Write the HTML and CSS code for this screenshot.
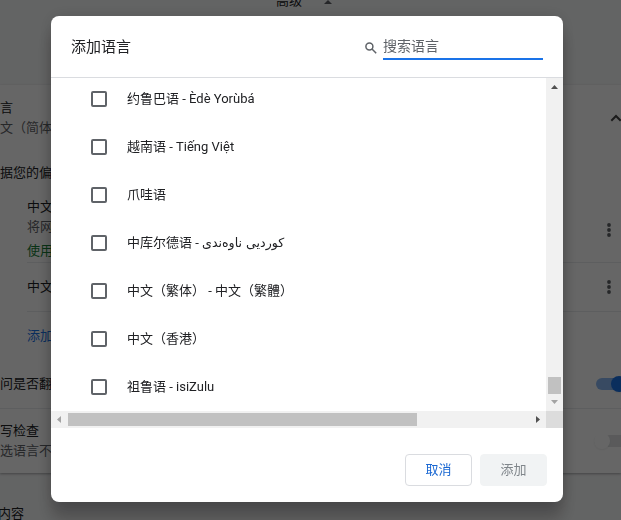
FILE: index.html
```html
<!DOCTYPE html>
<html lang="zh-CN">
<head>
<meta charset="utf-8">
<title>添加语言</title>
<link rel="stylesheet" href="styles.css">
</head>
<body>
<main class="page">
  <div class="advanced"><span>高级</span><svg width="8" height="4" viewBox="0 0 8 4"><path d="M0 4l4-4 4 4z" fill="#5f6368"/></svg></div>
  <section class="card">
    <div class="row row-language">
      <div><p>言</p><p class="muted">文（简体</p></div>
      <svg class="chevron" width="12" height="8" viewBox="0 0 12 8"><path d="M1.3 6.7L6 2l4.700 4.700" fill="none" stroke="#444" stroke-width="2"/></svg>
    </div>
    <div class="row row-order"><p>据您的偏</p></div>
    <div class="languages">
      <div class="row row-first">
        <div><p>中文</p><p class="muted">将网</p><p class="green">使用</p></div>
        <svg class="more" width="4" height="14" viewBox="0 0 4 14" fill="#5f6368"><circle cx="2" cy="2" r="1.900"/><circle cx="2" cy="7" r="1.900"/><circle cx="2" cy="12" r="1.900"/></svg>
      </div>
      <div class="row row-second">
        <p>中文</p>
        <svg class="more" width="4" height="14" viewBox="0 0 4 14" fill="#5f6368"><circle cx="2" cy="2" r="1.900"/><circle cx="2" cy="7" r="1.900"/><circle cx="2" cy="12" r="1.900"/></svg>
      </div>
      <div class="row row-add"><p class="blue">添加</p></div>
    </div>
    <div class="row row-translate"><p>问是否翻</p><span class="toggle on"></span></div>
    <div class="row row-spell"><div><p>写检查</p><p class="muted">选语言不</p></div><span class="toggle"></span></div>
  </section>
  <h2 class="next">内容</h2>
</main>
<div class="scrim">
  <div class="dialog">
    <header class="head">
      <h1>添加语言</h1>
      <div class="search">
        <svg width="12" height="12" viewBox="0 0 12 12" fill="none" stroke="#5f6368" stroke-width="1.500"><circle cx="4.400" cy="4.400" r="3.500"/><path d="M7 7l4.200 4.200"/></svg>
        <span class="field">搜索语言</span>
      </div>
    </header>
    <div class="body">
      <div class="viewport">
        <ul class="list">
          <li><i class="box"></i><span>约鲁巴语 - Èdè Yorùbá</span></li>
          <li><i class="box"></i><span>越南语 - Tiếng Việt</span></li>
          <li><i class="box"></i><span>爪哇语</span></li>
          <li><i class="box"></i><span>中库尔德语 - <bdi class="arabic" lang="ckb">کوردیی ناوەندی</bdi></span></li>
          <li><i class="box"></i><span>中文（繁体） - 中文（繁體）</span></li>
          <li><i class="box"></i><span>中文（香港）</span></li>
          <li><i class="box"></i><span>祖鲁语 - isiZulu</span></li>
        </ul>
      </div>
      <div class="vbar">
        <svg width="7" height="4" viewBox="0 0 7 4"><path d="M0 4L3.500 0 7 4z" fill="#505050"/></svg>
        <span class="vthumb"></span>
        <svg width="7" height="4" viewBox="0 0 7 4"><path d="M0 0L3.500 4 7 0z" fill="#a3a3a3"/></svg>
      </div>
      <div class="hbar">
        <svg width="4" height="7" viewBox="0 0 4 7"><path d="M4 0L0 3.500 4 7z" fill="#a3a3a3"/></svg>
        <span class="hthumb"></span>
        <svg width="4" height="7" viewBox="0 0 4 7"><path d="M0 0l4 3.500L0 7z" fill="#505050"/></svg>
      </div>
      <div class="corner"></div>
    </div>
    <footer class="foot">
      <button class="btn">取消</button>
      <button class="btn disabled" disabled>添加</button>
    </footer>
  </div>
</div>
</body>
</html>
```
FILE: styles.css
```css
* { box-sizing: border-box; margin: 0; padding: 0; }
body {
  width: 621px; height: 520px; overflow: hidden;
  font: 13px/20px Roboto, "Noto Sans CJK SC", sans-serif;
  color: #202124; background: #f8f9fa;
}
svg { display: block; flex: none; }
.page { height: 520px; overflow: hidden; white-space: nowrap; }
.advanced { height: 85px; padding-left: 276px; display: flex; align-items: flex-start; gap: 22px; }
.advanced span { margin-top: -9px; }
.card { height: 388px; background: #fff; box-shadow: 0 1px 2px rgba(60,64,67,.3), 0 1px 3px rgba(60,64,67,.15); }
.row { display: flex; justify-content: space-between; align-items: center; }
.muted { color: #5f6368; }
.green { color: #188038; }
.blue { color: #1a73e8; }
.row-language { height: 65px; }
.chevron { margin-right: -1px; }
.row-order { height: 45px; }
.languages { margin-left: 27px; }
.row-first { height: 68px; border-bottom: 1px solid #e8eaed; }
.row-first .green { margin-top: 4px; }
.row-first .more { margin-top: 2px; }
.row-second { height: 49px; border-bottom: 1px solid #e8eaed; }
.more { margin-right: 10px; }
.row-add { height: 47px; }
.row-translate { height: 50px; border-bottom: 1px solid #e8eaed; }
.row-spell { height: 64px; padding-bottom: 1px; }
.toggle { display: flex; align-items: center; width: 34px; height: 12px; margin-right: -9px; border-radius: 6px; background: #e0e2e4; flex: none; }
.toggle::before { content: ""; width: 16px; height: 16px; border-radius: 50%; background: #fff; box-shadow: 0 1px 2px rgba(0,0,0,.06); }
.row-spell .toggle { margin-right: -7px; }
.toggle.on { background: #8cb9f4; justify-content: flex-end; }
.toggle.on::before { background: #1a73e8; margin-right: 3px; }
.next { font-size: 13px; font-weight: 400; margin: 31px 0 0 -2px; }

.scrim { position: fixed; inset: 0; background: rgba(0,0,0,.6); padding: 16px 0 0 51px; }
.dialog {
  width: 512px; height: 486px; background: #fff; border-radius: 8px; overflow: hidden;
  display: flex; flex-direction: column;
  box-shadow: 0 0 16px rgba(0,0,0,.12), 0 16px 16px rgba(0,0,0,.24);
}
.head { height: 62px; padding: 0 20px; border-bottom: 1px solid #dadce0; display: flex; justify-content: space-between; align-items: center; }
.head h1 { font-size: 15px; font-weight: 400; }
.search { display: flex; align-items: center; gap: 6px; color: #5f6368; }
.field { width: 160px; height: 26px; border-bottom: 2px solid #1a73e8; font-size: 14px; line-height: 25px; }
.search svg { margin-top: 2px; }
.body { display: grid; grid-template: 333px 17px / 495px 17px; }
.viewport { overflow: hidden; }
.list { list-style: none; margin-top: -3px; }
.list li { height: 48px; padding-left: 40px; display: flex; align-items: center; gap: 20px; white-space: pre; }
.box { width: 16px; height: 16px; border: 2px solid #5f6368; border-radius: 2px; }
.arabic { font-family: "DejaVu Sans", sans-serif; font-size: 12.6px; line-height: 1; }
.vbar { background: #f1f1f1; display: flex; flex-direction: column; align-items: center; padding: 7px 0; }
.vthumb { width: 13px; height: 17px; margin: auto 0 6px; background: #c1c1c1; }
.hbar { background: #f1f1f1; display: flex; align-items: center; padding: 0 6px; }
.hthumb { width: 349px; height: 13px; margin: 0 auto 0 7px; background: #c1c1c1; }
.corner { background: #dcdcdc; }
.foot { flex: 1; display: flex; justify-content: flex-end; gap: 8px; padding: 26px 16px 0; }
.btn { width: 67px; height: 32px; padding-bottom: 1px; border: 1px solid #dadce0; border-radius: 4px; background: #fff; color: #1967d2; font: inherit; }
.btn.disabled { border-color: #f1f3f4; background: #f1f3f4; color: #80868b; }
```
